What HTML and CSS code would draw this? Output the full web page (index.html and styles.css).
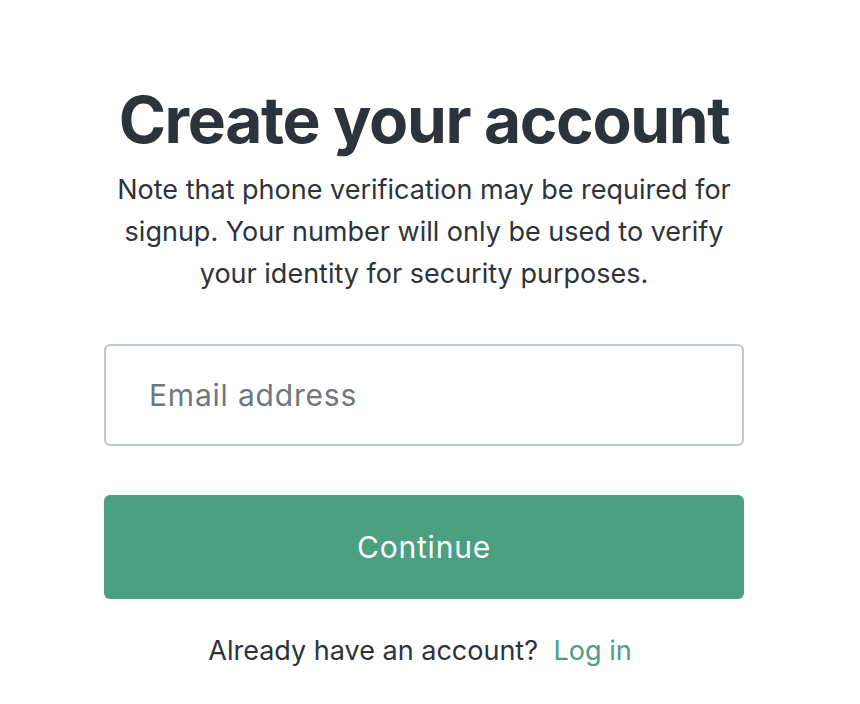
FILE: index.html
```html
<!DOCTYPE html>
<html lang="en">
<head>
<meta charset="utf-8">
<title>Create your account</title>
<link rel="stylesheet" href="styles.css">
</head>
<body>
<main class="page">
  <section class="card">
    <h1 class="title">Create your account</h1>
    <p class="note">Note that phone verification may be required for signup. Your number will only be used to verify your identity for security purposes.</p>
    <form class="form">
      <input class="email" type="email" placeholder="Email address">
      <button class="continue" type="button">Continue</button>
    </form>
    <p class="login">Already have an account? <a class="login-link" href="#">Log in</a></p>
  </section>
</main>
</body>
</html>
```

FILE: styles.css
```css
* { box-sizing: border-box; }
html, body { margin: 0; padding: 0; background: #ffffff; }
body {
  font-family: Inter, "Noto Sans", sans-serif;
  color: #2d333a;
  width: 860px;
  height: 704px;
  overflow: hidden;
}
.page {
  display: flex;
  padding: 80px 0 0 104px;
}
.card {
  width: 640px;
  display: flex;
  flex-direction: column;
  align-items: center;
  text-align: center;
}
.title {
  margin: 0;
  font-size: 64px;
  font-weight: 700;
  line-height: 80px;
  letter-spacing: -1.35px;
  color: #2d333a;
}
.note {
  margin: 9px 0 0;
  width: 640px;
  font-size: 27px;
  line-height: 42px;
  color: #2d333a;
}
.form {
  width: 640px;
  display: flex;
  flex-direction: column;
  margin-top: 49px;
}
.email {
  height: 102px;
  border: 2px solid #c2c8d0;
  border-radius: 6px;
  padding: 0 43px;
  font-family: inherit;
  font-size: 30px;
  letter-spacing: 0.8px;
  color: #2d333a;
  outline: none;
}
.email::placeholder { color: #6f7780; }
.continue {
  margin-top: 49px;
  height: 104px;
  border: none;
  border-radius: 6px;
  background: #4aa081;
  color: #ffffff;
  font-family: inherit;
  font-size: 30px;
  letter-spacing: 0.8px;
}
.login {
  margin: 32px 0 0;
  padding-right: 8px;
  font-size: 27px;
  line-height: 40px;
  color: #2d333a;
}
.login-link {
  margin-left: 8px;
  color: #4aa081;
  text-decoration: none;
}
```
